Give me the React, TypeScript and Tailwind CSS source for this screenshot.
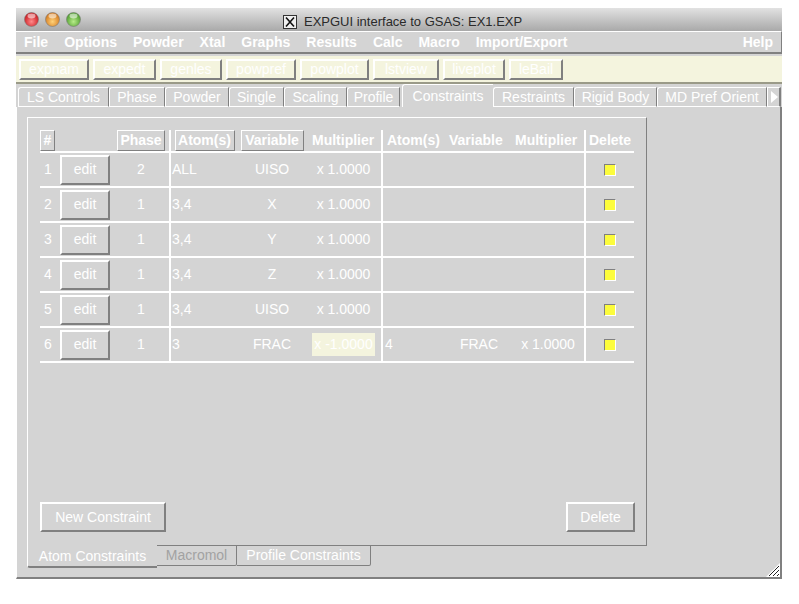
import React from "react";

const raised = "border border-t-white border-l-white border-r-[#808080] border-b-[#808080]";

const menus = ["File", "Options", "Powder", "Xtal", "Graphs", "Results", "Calc", "Macro", "Import/Export"];

const tools = [
  { label: "expnam", w: 70 },
  { label: "expedt", w: 63 },
  { label: "genles", w: 62 },
  { label: "powpref", w: 70 },
  { label: "powplot", w: 69 },
  { label: "lstview", w: 66 },
  { label: "liveplot", w: 62 },
  { label: "leBail", w: 54 },
];

const tabs = [
  { label: "LS Controls", w: 91 },
  { label: "Phase", w: 56 },
  { label: "Powder", w: 64 },
  { label: "Single", w: 55 },
  { label: "Scaling", w: 63 },
  { label: "Profile", w: 53 },
  { label: "Constraints", w: 91, active: true },
  { label: "Restraints", w: 81 },
  { label: "Rigid Body", w: 83 },
  { label: "MD Pref Orient", w: 110 },
];

const rows = [
  { n: 1, phase: "2", atoms: "ALL", v: "UISO", m: "x 1.0000" },
  { n: 2, phase: "1", atoms: "3,4", v: "X", m: "x 1.0000" },
  { n: 3, phase: "1", atoms: "3,4", v: "Y", m: "x 1.0000" },
  { n: 4, phase: "1", atoms: "3,4", v: "Z", m: "x 1.0000" },
  { n: 5, phase: "1", atoms: "3,4", v: "UISO", m: "x 1.0000" },
  { n: 6, phase: "1", atoms: "3", v: "FRAC", m: "x -1.0000", hl: true, a2: "4", v2: "FRAC", m2: "x 1.0000" },
];

function Light({ c1, c2 }: { c1: string; c2: string }) {
  const id = "g" + c1.replace("#", "");
  return (
    <svg width="15" height="15" viewBox="0 0 15 15">
      <defs>
        <radialGradient id={id} cx="50%" cy="65%" r="60%">
          <stop offset="0%" stopColor={c1} />
          <stop offset="100%" stopColor={c2} />
        </radialGradient>
      </defs>
      <circle cx="7.5" cy="7.5" r="7" fill={`url(#${id})`} stroke="#7a7a7a" strokeWidth="0.6" />
      <ellipse cx="7.5" cy="4" rx="4" ry="2.4" fill="white" opacity="0.55" />
    </svg>
  );
}

function VLine() {
  return <div className="w-[2px] self-stretch bg-white" />;
}

function HLine() {
  return <div className="h-[2px] w-[594px] bg-white" />;
}

export default function App() {
  return (
    <div
      className="min-h-screen bg-white pt-2 pl-4 text-white"
      style={{ fontFamily: '"Liberation Sans", Arial, sans-serif' }}
    >
      <div className="flex h-[571px] w-[766px] flex-col bg-[#d4d4d4]">
        {/* title bar */}
        <div className="relative flex h-[23px] items-center bg-linear-to-b from-[#e2e2e2] to-[#a9a9a9] pl-[8px]">
          <div className="flex gap-[6px]">
            <Light c1="#ff8a8a" c2="#c8141a" />
            <Light c1="#ffd27a" c2="#d2761a" />
            <Light c1="#b8ec8a" c2="#4a9a2a" />
          </div>
          <div className="absolute left-[267px] top-[4px] flex items-center gap-[7px] text-[13px] text-[#2a2a2a]">
            <svg width="14" height="14" viewBox="0 0 14 14">
              <rect x="0.5" y="0.5" width="13" height="13" fill="#f0f0f0" stroke="#333" />
              <path d="M3 2.5 L11 11.5 M11 2.5 L3 11.5" stroke="#111" strokeWidth="1.6" />
            </svg>
            <span>EXPGUI interface to GSAS: EX1.EXP</span>
          </div>
        </div>

        {/* menu bar */}
        <div className="flex h-[23px] items-center border-t border-r border-b-2 border-t-white border-r-[#808080] border-b-[#808080] pl-[8px] pr-[8px] text-[14px] font-bold">
          <div className="flex gap-[16px]">
            {menus.map((m) => (
              <span key={m}>{m}</span>
            ))}
          </div>
          <span className="ml-auto">Help</span>
        </div>

        {/* toolbar */}
        <div className="mt-[2px] flex h-[28px] items-center gap-[4px] border-b-2 border-b-[#9a9a88] bg-[#f4f4de] pl-[3px] text-[14px]">
          {tools.map((t) => (
            <div
              key={t.label}
              className={`${raised} flex h-[21px] items-center justify-center border-2 bg-[#f4f4de]`}
              style={{ width: t.w }}
            >
              {t.label}
            </div>
          ))}
        </div>

        {/* tab row */}
        <div className="flex h-[23px] items-end pl-[2px] text-[14px]">
          {tabs.map((t) =>
            t.active ? (
              <div
                key={t.label}
                className="ml-[2px] flex h-[23px] items-center justify-center rounded-tl-[3px] border-t border-l border-t-white border-l-white"
                style={{ width: t.w }}
              >
                {t.label}
              </div>
            ) : (
              <div
                key={t.label}
                className="flex h-[20px] items-center justify-center rounded-tl-[3px] border-t border-l border-r border-b border-t-white border-l-white border-r-[#808080] border-b-white"
                style={{ width: t.w }}
              >
                {t.label}
              </div>
            )
          )}
          <div className="flex h-[20px] w-[14px] items-center justify-center border-t border-l border-r-2 border-b border-t-white border-l-white border-r-[#808080] border-b-white">
            <svg width="8" height="12" viewBox="0 0 8 12">
              <path d="M1 0 L8 6 L1 12 Z" fill="white" />
            </svg>
          </div>
        </div>

        {/* content */}
        <div className="relative flex flex-1 flex-col border-l border-r-2 border-b-2 border-l-white border-r-[#808080] border-b-[#808080] pl-[10px] pt-[10px]">
          <div className={`${raised} flex h-[429px] w-[620px] flex-col pl-[12px] pt-[12px] pr-[11px] pb-[13px]`}>
            {/* table */}
            <div className="flex flex-col text-[14px]">
              <div className="flex h-[21px] items-stretch font-bold">
                <div className="w-[17px]">
                  <div className={`${raised} flex h-[21px] w-[15px] items-center justify-center`}>#</div>
                </div>
                <div className="w-[56px]" />
                <div className="flex w-[56px] justify-center">
                  <div className={`${raised} flex h-[21px] w-[48px] items-center justify-center`}>Phase</div>
                </div>
                <VLine />
                <div className="flex w-[67px] justify-center">
                  <div className={`${raised} flex h-[21px] w-[60px] items-center justify-center`}>Atom(s)</div>
                </div>
                <div className="flex w-[68px] justify-center">
                  <div className={`${raised} flex h-[21px] w-[63px] items-center justify-center`}>Variable</div>
                </div>
                <div className="flex w-[75px] items-center pl-[6px]">Multiplier</div>
                <VLine />
                <div className="flex w-[63px] items-center pl-[4px]">Atom(s)</div>
                <div className="flex w-[66px] items-center pl-[3px]">Variable</div>
                <div className="flex w-[72px] items-center pl-[3px]">Multiplier</div>
                <VLine />
                <div className="flex w-[48px] items-center pl-[3px]">Delete</div>
              </div>
              <HLine />
              {rows.map((r) => (
                <React.Fragment key={r.n}>
                  <div className="flex h-[33px] items-stretch">
                    <div className="flex w-[17px] items-center pl-[4px]">{r.n}</div>
                    <div className="flex w-[56px] items-center pl-[3px]">
                      <div className={`${raised} flex h-[30px] w-[50px] items-center justify-center border-2`}>edit</div>
                    </div>
                    <div className="flex w-[56px] items-center justify-center">{r.phase}</div>
                    <VLine />
                    <div className="flex w-[67px] items-center pl-[1px]">{r.atoms}</div>
                    <div className="flex w-[68px] items-center justify-center">{r.v}</div>
                    <div className="flex w-[75px] items-center justify-center">
                      <span className={r.hl ? "bg-[#f4f4de] px-[2px] py-[1px]" : ""}>{r.m}</span>
                    </div>
                    <VLine />
                    <div className="flex w-[63px] items-center pl-[2px]">{r.a2 ?? ""}</div>
                    <div className="flex w-[66px] items-center justify-center">{r.v2 ?? ""}</div>
                    <div className="flex w-[72px] items-center justify-center">{r.m2 ?? ""}</div>
                    <VLine />
                    <div className="flex w-[48px] items-center justify-center">
                      <div className="h-[12px] w-[12px] border border-t-[#808080] border-l-[#808080] border-r-white border-b-white bg-[#fcfc3c]" />
                    </div>
                  </div>
                  <HLine />
                </React.Fragment>
              ))}
            </div>

            <div className="flex-1" />

            {/* buttons */}
            <div className="flex items-center justify-between text-[14px]">
              <div className={`${raised} flex h-[30px] w-[126px] items-center justify-center border-2`}>New Constraint</div>
              <div className={`${raised} flex h-[30px] w-[69px] items-center justify-center border-2`}>Delete</div>
            </div>
          </div>

          {/* bottom tabs */}
          <div className="-mt-[1px] flex items-start text-[14px]">
            <div className="flex h-[23px] w-[130px] items-center justify-center rounded-bl-[3px] border-l border-b-2 border-l-white border-b-[#808080] bg-[#d4d4d4] pt-[2px]">
              Atom Constraints
            </div>
            <div className="flex h-[21px] w-[80px] items-center justify-center rounded-br-[2px] border-t border-r border-b border-t-[#808080] border-r-[#808080] border-b-[#808080] text-[#a2a2a2]">
              Macromol
            </div>
            <div className="flex h-[21px] w-[134px] items-center justify-center rounded-br-[2px] border-t border-r border-b border-t-[#808080] border-r-[#808080] border-b-[#808080]">
              Profile Constraints
            </div>
          </div>

          {/* resize grip */}
          <svg className="absolute right-0 bottom-0" width="14" height="14" viewBox="0 0 14 14">
            <path d="M0 14 L14 0 L14 14 Z" fill="white" />
            <path d="M3 13 L13 3 M7 13 L13 7 M11 13 L13 11" stroke="#222" strokeWidth="1" />
          </svg>
        </div>
      </div>
    </div>
  );
}
